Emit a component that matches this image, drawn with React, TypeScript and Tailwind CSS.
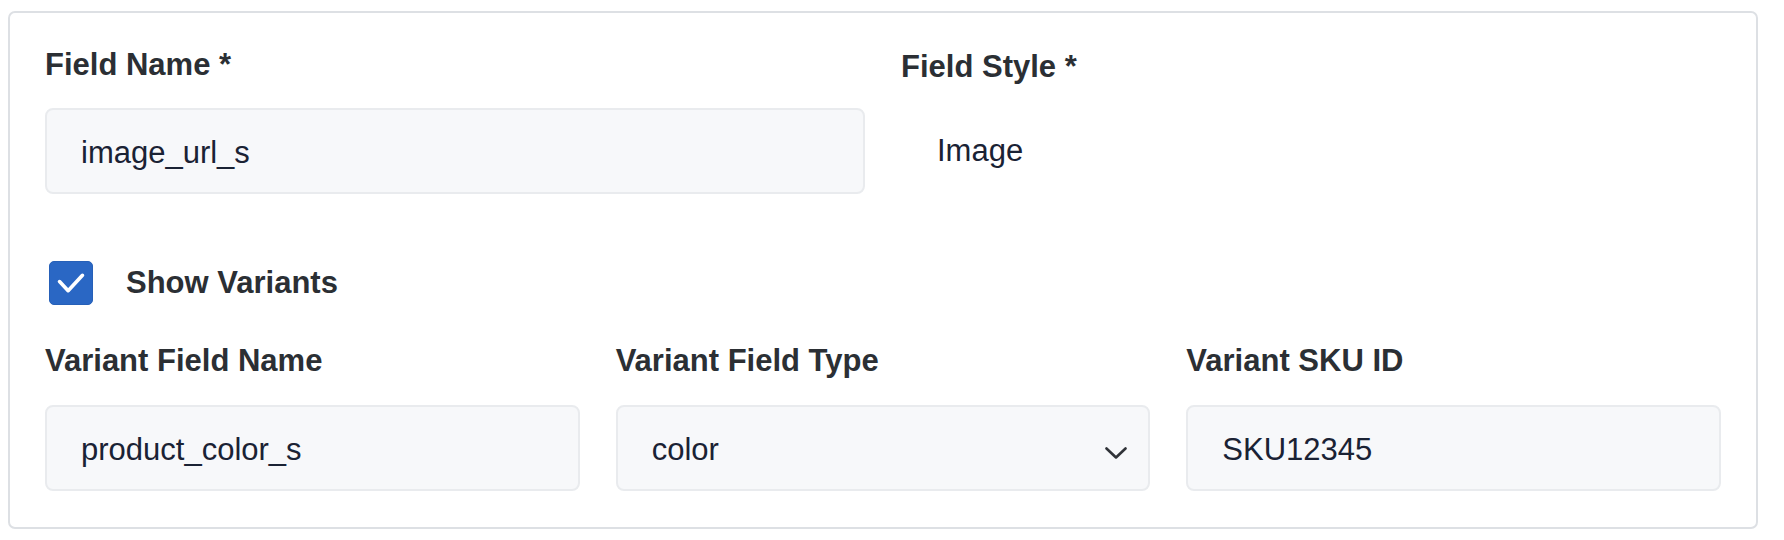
import React from "react";

const font = { fontFamily: '"Liberation Sans", Arial, Helvetica, sans-serif' };

function Label({ children, className = "" }: { children: React.ReactNode; className?: string }) {
  return (
    <div className={"text-[31px] leading-[36px] font-bold text-[#2b2f34] " + className}>{children}</div>
  );
}

function Field({ value, select = false }: { value: string; select?: boolean }) {
  return (
    <div className="mt-[26px] h-[86px] rounded-[8px] border-2 border-[#e9ebee] bg-[#f7f8fa] flex items-center justify-between pl-[34px] pr-[21px] pt-[4px]">
      <span className="text-[31px] leading-[36px] text-[#1a2234]">{value}</span>
      {select && (
        <svg width="22" height="12" viewBox="0 0 22 12" className="mt-[6px]" fill="none">
          <polyline points="1.5,1.5 11,10.5 20.5,1.5" stroke="#303338" strokeWidth="2.6" strokeLinecap="round" strokeLinejoin="round" />
        </svg>
      )}
    </div>
  );
}

export default function App() {
  return (
    <div className="bg-white w-[1784px] h-[540px] pt-[11px] pl-[8px]" style={font}>
      <div className="w-[1750px] h-[518px] border-2 border-[#dde0e4] rounded-[7px] px-[35px] pt-[34px]">
        <div className="grid grid-cols-2 gap-x-[36px]">
          <div>
            <Label>Field Name *</Label>
            <div className="mt-[25px] h-[86px] rounded-[8px] border-2 border-[#e9ebee] bg-[#f7f8fa] flex items-center pl-[34px] pt-[4px]">
              <span className="text-[31px] leading-[36px] text-[#1a2234]">image_url_s</span>
            </div>
          </div>
          <div>
            <Label className="pt-[2px]">Field Style *</Label>
            <div className="mt-[23px] h-[86px] flex items-center pl-[36px]">
              <span className="text-[31px] leading-[36px] text-[#1a2234]">Image</span>
            </div>
          </div>
        </div>

        <div className="mt-[67px] h-[44px] flex items-center">
          <div className="ml-[4px] w-[44px] h-[44px] rounded-[5px] bg-[#2a67c4] border border-[#2660b8] flex items-center justify-center">
            <svg width="44" height="44" viewBox="0 0 44 44" fill="none">
              <polyline points="10,20.5 19,30 34,14" stroke="white" strokeWidth="3.8" strokeLinecap="round" strokeLinejoin="round" />
            </svg>
          </div>
          <span className="ml-[33px] text-[31px] leading-[36px] font-bold text-[#2b2f34]">Show Variants</span>
        </div>

        <div className="mt-[38px] grid grid-cols-3 gap-x-[36px]">
          <div>
            <Label>Variant Field Name</Label>
            <Field value="product_color_s" />
          </div>
          <div>
            <Label>Variant Field Type</Label>
            <Field value="color" select />
          </div>
          <div>
            <Label>Variant SKU ID</Label>
            <Field value="SKU12345" />
          </div>
        </div>
      </div>
    </div>
  );
}
